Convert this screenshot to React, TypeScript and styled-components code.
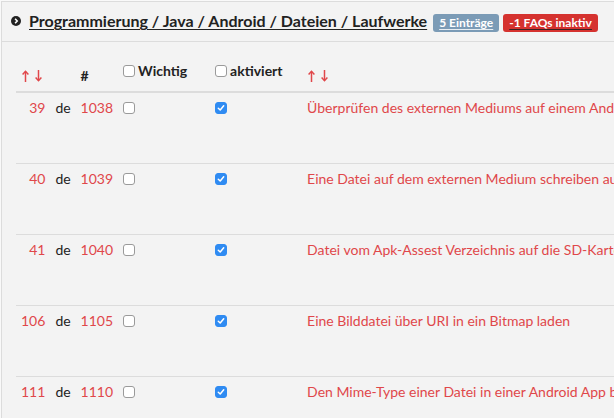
import styled, { createGlobalStyle } from "styled-components";

const GlobalStyle = createGlobalStyle`
  html, body {
    margin: 0;
    padding: 0;
    background: #f9f9f9;
    overflow: hidden;
  }
  body {
    font-family: Lato, "Liberation Sans", sans-serif;
    font-size: 14px;
    line-height: 20px;
    color: #222;
  }
`;

const RED = "#e0474a";

const Panel = styled.div`
  margin: 1px 0 0 1px;
  width: max-content;
  min-width: 100vw;
  background: #f3f3f3;
  border-top: 1px solid #dcdcdc;
  border-left: 1px solid #dcdcdc;
`;

const Heading = styled.div`
  display: flex;
  align-items: baseline;
  padding: 10px 10px 9px 9px;
  border-bottom: 1px solid #dcdcdc;
  line-height: 18px;
`;

const TitleLink = styled.a`
  font-size: 16px;
  font-weight: 700;
  color: #222;
  text-decoration: underline;
  text-underline-offset: 2px;
  display: inline-flex;
  align-items: baseline;
  gap: 8px;
  margin-right: 2px;

  svg {
    align-self: center;
    width: 10px;
    height: 10px;
  }
`;

const Badge = styled.a<{ $bg: string; $line: string }>`
  display: inline-block;
  font-size: 12px;
  font-weight: 700;
  line-height: 12px;
  padding: 3px 6px 3px;
  margin-left: 4px;
  border-radius: 3px;
  color: #fff;
  background: ${(p) => p.$bg};
  text-decoration: underline;
  text-decoration-color: ${(p) => p.$line};
  text-underline-offset: 2px;
`;

const Body = styled.div`
  padding: 14px 0 0 14px;
`;

const Table = styled.table`
  border-collapse: collapse;
  border-spacing: 0;
`;

const Th = styled.th<{ $w?: number }>`
  padding: 5px;
  text-align: left;
  vertical-align: bottom;
  font-weight: 700;
  border-bottom: 2px solid #dcdcdc;
  width: ${(p) => (p.$w ? `${p.$w}px` : "auto")};
`;

const Td = styled.td<{ $align?: string; $red?: boolean }>`
  padding: 5px;
  height: 60px;
  vertical-align: top;
  text-align: ${(p) => p.$align || "left"};
  color: ${(p) => (p.$red ? RED : "#222")};
  white-space: nowrap;
  border-top: 1px solid #dcdcdc;

  tr:first-child > & {
    border-top: none;
  }
`;

const HeadLabel = styled.label`
  display: inline-flex;
  align-items: center;
  gap: 3px;
  margin-bottom: 5px;
  font-weight: 700;
`;

const Box = styled.span<{ $checked?: boolean }>`
  display: inline-block;
  box-sizing: border-box;
  width: 12px;
  height: 12px;
  border-radius: 3px;
  vertical-align: -1px;
  position: relative;
  background: ${(p) => (p.$checked ? "#2f8bf2" : "#fff")};
  border: 1px solid ${(p) => (p.$checked ? "#2f8bf2" : "#9a9a9a")};

  svg {
    position: absolute;
    left: 1px;
    top: 1px;
  }
`;

const Sort = styled.span`
  display: inline-flex;
  gap: 6px;
  align-items: flex-end;
  margin-left: 1px;
  vertical-align: -1px;
`;

const Arrow = ({ down }: { down?: boolean }) => (
  <svg width="7" height="12" viewBox="0 0 7 12">
    <g
      fill="none"
      stroke={RED}
      strokeWidth="1.5"
      transform={down ? "rotate(180 3.5 6)" : undefined}
    >
      <path d="M3.5 1.5V12" />
      <path d="M0.6 4.4L3.5 1.3L6.4 4.4" />
    </g>
  </svg>
);

const SortArrows = () => (
  <Sort>
    <Arrow />
    <Arrow down />
  </Sort>
);

const Check = ({ checked }: { checked?: boolean }) => (
  <Box $checked={checked}>
    {checked && (
      <svg width="8" height="8" viewBox="0 0 8 8">
        <path
          d="M1.3 4.2L3.2 6L6.7 1.8"
          fill="none"
          stroke="#fff"
          strokeWidth="1.5"
          strokeLinecap="round"
          strokeLinejoin="round"
        />
      </svg>
    )}
  </Box>
);

const ChevronCircle = () => (
  <svg viewBox="0 0 10 10">
    <circle cx="5" cy="5" r="5" fill="#222" />
    <path
      d="M4.1 2.8L6.2 5L4.1 7.2"
      fill="none"
      stroke="#fff"
      strokeWidth="1.6"
    />
  </svg>
);

const rows = [
  { pos: 39, id: 1038, title: "Überprüfen des externen Mediums auf einem Android Gerät" },
  { pos: 40, id: 1039, title: "Eine Datei auf dem externen Medium schreiben auf Android" },
  { pos: 41, id: 1040, title: "Datei vom Apk-Assest Verzeichnis auf die SD-Karte kopieren" },
  { pos: 106, id: 1105, title: "Eine Bilddatei über URI in ein Bitmap laden" },
  { pos: 111, id: 1110, title: "Den Mime-Type einer Datei in einer Android App bestimmen" },
];

export default function App() {
  return (
    <>
      <GlobalStyle />
      <Panel>
        <Heading>
          <TitleLink href="#">
            <ChevronCircle />
            Programmierung / Java / Android / Dateien / Laufwerke
          </TitleLink>
          <Badge href="#" $bg="#7b9bb6" $line="#e8eef3">5 Einträge</Badge>
          <Badge href="#" $bg="#d5322f" $line="#3a2222">-1 FAQs inaktiv</Badge>
        </Heading>
        <Body>
          <Table>
            <thead>
              <tr>
                <Th $w={22}>
                  <SortArrows />
                </Th>
                <Th $w={15}></Th>
                <Th $w={31}>#</Th>
                <Th $w={82}>
                  <HeadLabel>
                    <Check />
                    Wichtig
                  </HeadLabel>
                </Th>
                <Th $w={82}>
                  <HeadLabel>
                    <Check />
                    aktiviert
                  </HeadLabel>
                </Th>
                <Th>
                  <SortArrows />
                </Th>
              </tr>
            </thead>
            <tbody>
              {rows.map((r) => (
                <tr key={r.id}>
                  <Td $align="right" $red>{r.pos}</Td>
                  <Td>de</Td>
                  <Td $red>{r.id}</Td>
                  <Td>
                    <Check />
                  </Td>
                  <Td>
                    <Check checked />
                  </Td>
                  <Td $red>{r.title}</Td>
                </tr>
              ))}
            </tbody>
          </Table>
        </Body>
      </Panel>
    </>
  );
}
